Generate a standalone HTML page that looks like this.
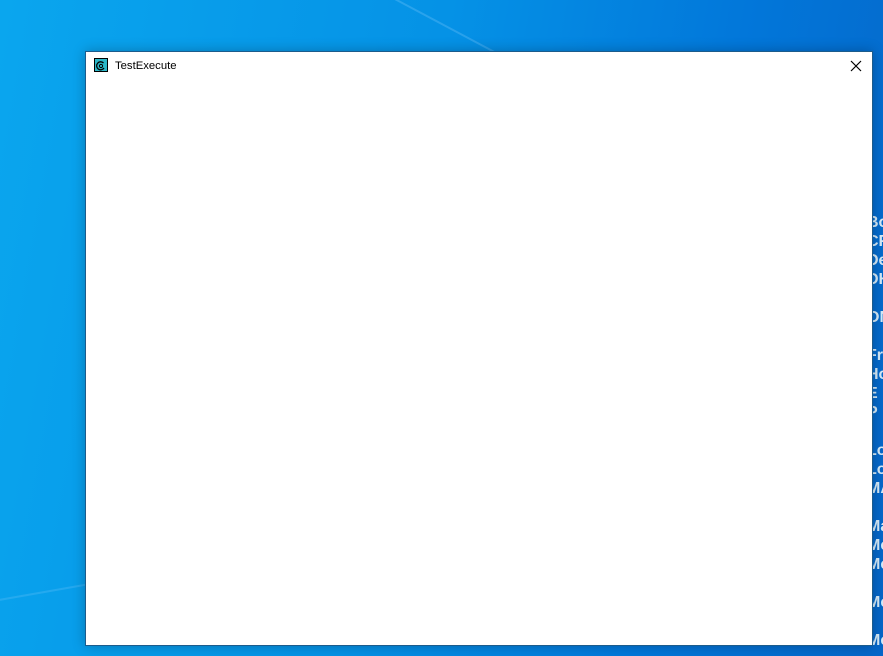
<!DOCTYPE html>
<html><head><style>
html,body{margin:0;padding:0;width:883px;height:656px;overflow:hidden}
body{position:relative;background:linear-gradient(100deg,#0aa6ee 0%,#0592e6 45%,#0277da 75%,#0566c8 100%);font-family:"Liberation Sans",sans-serif}
.streak{position:absolute;left:380px;top:-10px;width:260px;height:2px;background:rgba(150,210,255,.25);transform:rotate(28deg);transform-origin:0 0}
.streak2{position:absolute;left:-20px;top:590px;width:140px;height:2px;background:rgba(150,210,255,.2);transform:rotate(-10deg)}
.win{position:absolute;left:85px;top:51px;width:786px;height:593px;background:#fff;border:1px solid #1c5c8c;box-shadow:0 0 12px rgba(0,0,0,.25)}
.title{position:absolute;left:29px;top:8px;font-size:11.3px;color:#000}
.icon{position:absolute;left:8px;top:6px;width:14px;height:14px;background:#2bb8c8;border:1px solid #000;box-sizing:border-box}
.close{position:absolute;left:764px;top:8px}
.side{position:absolute;left:867px;top:0;font-family:"Liberation Sans",sans-serif;font-weight:bold;font-size:16px;color:#d6ecfa;line-height:19px;white-space:pre}
</style></head><body>
<div class="streak"></div><div class="streak2"></div>
<div class="side" style="top:213px">Bo
CF
De
DH

ON

Fre
Ho
E
P

Lo
Lo
MA

Ma
Me
Me

Me

Me</div>
<div class="win">
<div class="icon"><svg width="12" height="12" viewBox="0 0 12 12"><path d="M8.5 3A4 4 0 1 0 9 8" fill="none" stroke="#000" stroke-width="1.3"/><circle cx="6" cy="6" r="1.6" fill="none" stroke="#000" stroke-width="1"/></svg></div>
<div class="title">TestExecute</div>
<svg class="close" width="12" height="12" viewBox="0 0 12 12"><path d="M1 1L11 11M11 1L1 11" stroke="#000" stroke-width="1.2"/></svg>
</div>
</body></html>
